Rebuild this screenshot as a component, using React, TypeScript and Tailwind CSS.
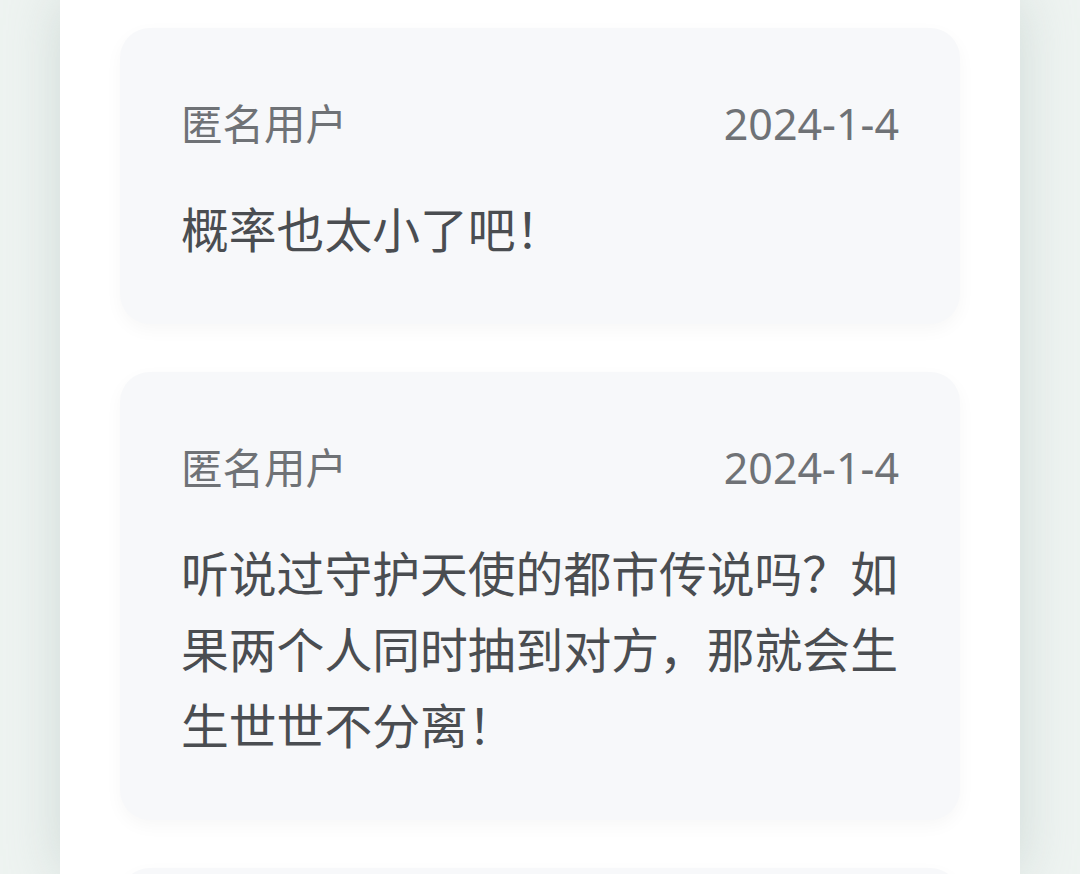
import React from 'react';

type Comment = {
  id: number;
  author: string;
  date: string;
  content: string;
};

const comments: Comment[] = [
  { id: 1, author: '匿名用户', date: '2024-1-4', content: '概率也太小了吧！' },
  {
    id: 2,
    author: '匿名用户',
    date: '2024-1-4',
    content: '听说过守护天使的都市传说吗？如果两个人同时抽到对方，那就会生生世世不分离！',
  },
  { id: 3, author: '匿名用户', date: '2024-1-3', content: '好期待！' },
];

const CommentCard = ({ comment }: { comment: Comment }) => (
  <div className="rounded-[30px] bg-[#f7f8fa] px-[61px] pt-[68px] pb-[56px] shadow-[0_6px_18px_rgba(0,0,0,0.035)]">
    <div className="flex items-center justify-between leading-[56px] text-[#6f7276]">
      <span className="text-[41.5px]">{comment.author}</span>
      <span className="text-[43px]">{comment.date}</span>
    </div>
    <p className="mt-[40px] text-[47.8px] leading-[76px] text-[#4a4d51]">{comment.content}</p>
  </div>
);

export default function App() {
  return (
    <div
      className="h-[874px] overflow-hidden bg-[#eef3f1]"
      style={{ fontFamily: '"Noto Sans", "Noto Sans CJK SC", sans-serif' }}
    >
      <div className="mx-auto h-full w-[960px] bg-white px-[60px] pt-[28px] shadow-[0_0_50px_rgba(170,190,185,0.45)]">
        <div className="flex flex-col gap-[48px]">
          {comments.map((c) => (
            <CommentCard key={c.id} comment={c} />
          ))}
        </div>
      </div>
    </div>
  );
}
